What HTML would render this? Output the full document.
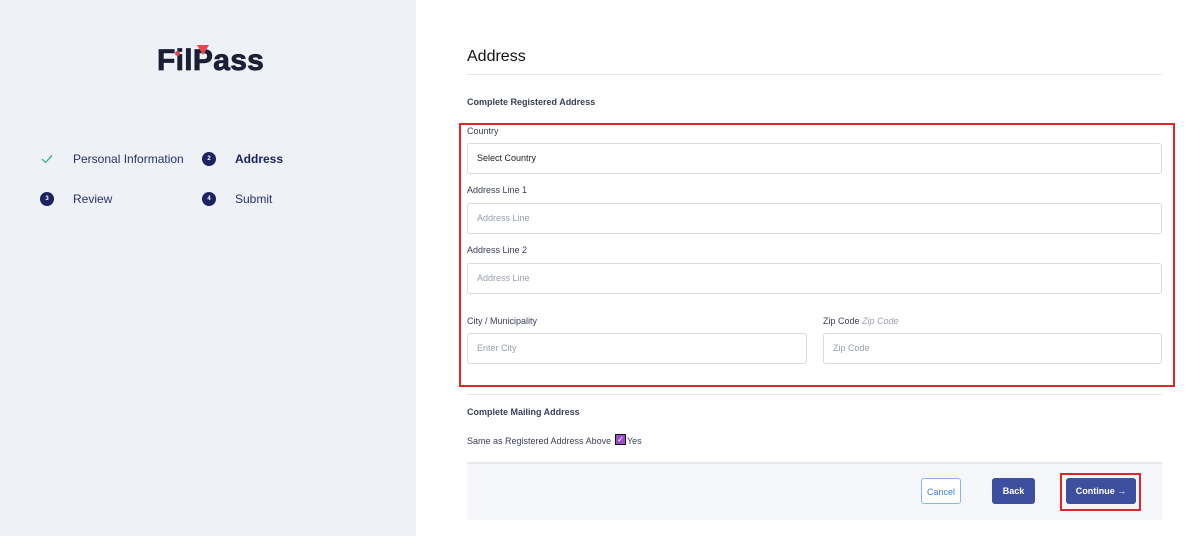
<!DOCTYPE html><html><head><style>
*{box-sizing:border-box;margin:0;padding:0}
body{width:1200px;height:536px;position:relative;font-family:"Liberation Sans",sans-serif;background:#fff;overflow:hidden}
.left{position:absolute;left:0;top:0;width:416px;height:536px;background:#eef1f6}
.abs{position:absolute}
.step{position:absolute;font-size:12px;color:#2b3170}
.num{position:absolute;width:14px;height:14px;border-radius:50%;background:#1d2260;color:#fff;font-size:6px;font-weight:bold;text-align:center;line-height:14px}
.lbl{position:absolute;font-size:9px;color:#3a3f55}
.inp{position:absolute;height:31px;border:1px solid #d8dbe2;border-radius:3px;font-size:9px;color:#9aa0ae;padding-left:9px;line-height:29px}
.btn{position:absolute;height:26px;border-radius:3px;font-size:9px;font-weight:bold;text-align:center;line-height:26px;color:#fff;background:#3e4fa0}
</style></head><body>
<div class="left">
<div class="abs" style="left:157px;top:44px;font-size:30px;font-weight:bold;color:#1a1f36;letter-spacing:0.3px;-webkit-text-stroke:0.8px #1a1f36">FilPass</div>
<div class="abs" style="left:197px;top:45px;width:0;height:0;border-left:6px solid transparent;border-right:6px solid transparent;border-top:10px solid #e8454f"></div>
<div class="abs" style="left:175px;top:51px;width:5px;height:5px;border-radius:50%;background:#e8454f"></div>
<svg class="abs" style="left:41px;top:154px" width="12" height="10"><path d="M1 5 L4.5 8.5 L11 1.5" stroke="#3cb38a" stroke-width="1.3" fill="none"/></svg>
<div class="step" style="left:73px;top:152px">Personal Information</div>
<div class="num" style="left:202px;top:152px">2</div>
<div class="step" style="left:235px;top:152px;font-weight:bold;color:#1d2260">Address</div>
<div class="num" style="left:40px;top:192px">3</div>
<div class="step" style="left:73px;top:192px">Review</div>
<div class="num" style="left:202px;top:192px">4</div>
<div class="step" style="left:235px;top:192px">Submit</div>
</div>
<div class="abs" style="left:467px;top:48px;font-size:16px;color:#111">Address</div>
<div class="abs" style="left:467px;top:74px;width:695px;height:1px;background:#e3e5ea"></div>
<div class="abs" style="left:467px;top:97px;font-size:9px;font-weight:bold;color:#3a3f55">Complete Registered Address</div>
<div class="abs" style="left:459px;top:123px;width:716px;height:264px;border:2px solid #e0262b"></div>
<div class="lbl" style="left:467px;top:126px">Country</div>
<div class="inp" style="left:467px;top:143px;width:695px;color:#222">Select Country</div>
<div class="lbl" style="left:467px;top:185px">Address Line 1</div>
<div class="inp" style="left:467px;top:203px;width:695px">Address Line</div>
<div class="lbl" style="left:467px;top:245px">Address Line 2</div>
<div class="inp" style="left:467px;top:263px;width:695px">Address Line</div>
<div class="lbl" style="left:467px;top:316px">City / Municipality</div>
<div class="inp" style="left:467px;top:333px;width:340px">Enter City</div>
<div class="lbl" style="left:823px;top:316px">Zip Code <i style="color:#9aa0ae">Zip Code</i></div>
<div class="inp" style="left:823px;top:333px;width:339px">Zip Code</div>
<div class="abs" style="left:467px;top:394px;width:695px;height:1px;background:#e3e5ea"></div>
<div class="abs" style="left:467px;top:407px;font-size:9px;font-weight:bold;color:#3a3f55">Complete Mailing Address</div>
<div class="lbl" style="left:467px;top:436px">Same as Registered Address Above</div>
<div class="abs" style="left:615px;top:434px;width:11px;height:11px;border:1px solid #111;background:#9b4fc8;color:#fff;font-size:8px;line-height:9px;text-align:center">✓</div>
<div class="lbl" style="left:627px;top:436px">Yes</div>
<div class="abs" style="left:467px;top:462px;width:695px;height:58px;background:#f5f6fa;border-top:2px solid #e6e8ee"></div>
<div class="btn" style="left:921px;top:478px;width:40px;background:#fff;color:#3b7de0;border:1px solid #8cb4ee;font-weight:normal">Cancel</div>
<div class="btn" style="left:992px;top:478px;width:43px">Back</div>
<div class="abs" style="left:1060px;top:473px;width:81px;height:38px;border:2px solid #e0262b"></div>
<div class="btn" style="left:1066px;top:478px;width:70px">Continue →</div>
</body></html>
